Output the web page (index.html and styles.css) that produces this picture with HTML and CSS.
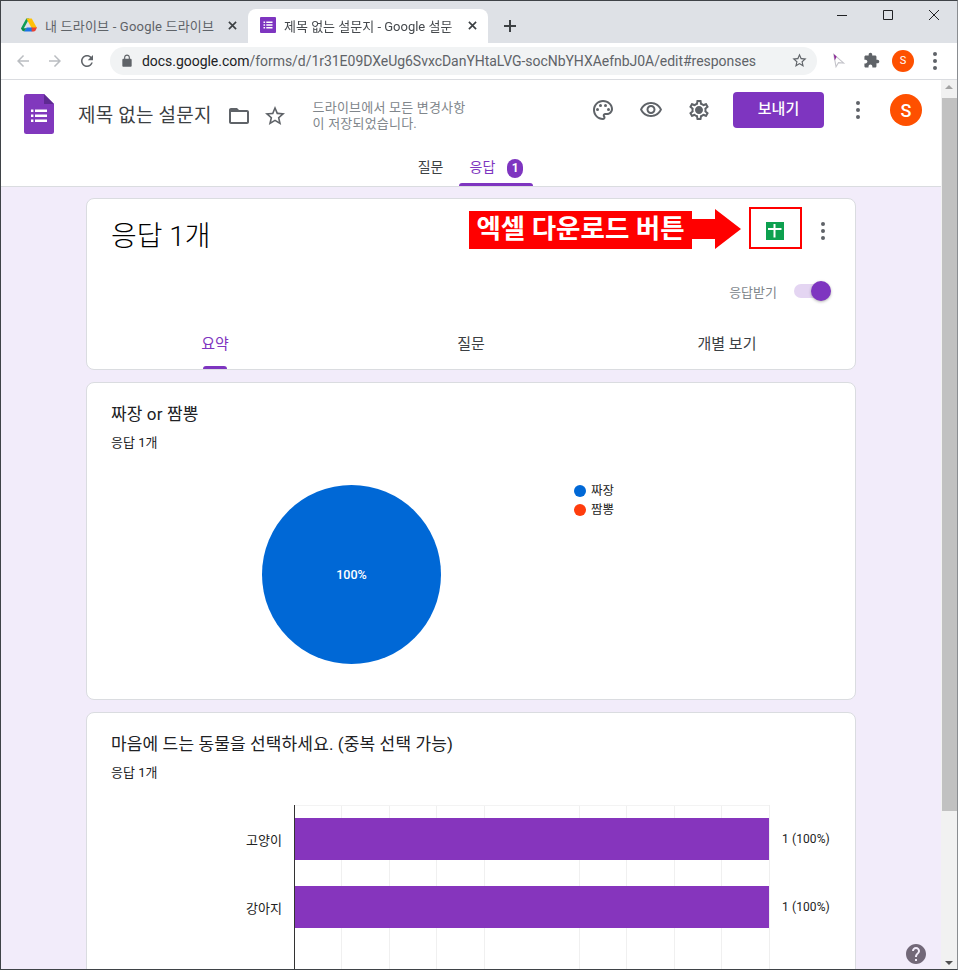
FILE: index.html
```html
<!DOCTYPE html>
<html lang="ko">
<head>
<meta charset="utf-8">
<title>제목 없는 설문지 - Google 설문지</title>
<link rel="stylesheet" href="styles.css">
</head>
<body>
<div class="window">
  <div class="tabstrip">
    <div class="tab">
      <svg class="favicon" viewBox="0 0 16 16"><path fill="#0f9d58" d="M5.3 1.5h3L3 11 1.6 14 0 11.2z"/><path fill="#ffc107" d="M5.3 1.5h5.4L16 11h-5.4z"/><path fill="#1a73e8" d="M3 14.6l2.7-4h5.6v4z"/><path fill="#ea4335" d="M10.6 10.6H16l-1.4 2.6-1.4 1.4h-2.6z"/><path fill="#0b8a4a" d="M0 11.2h5.5L3 14.6l-1.4-1z"/></svg>
      <span class="tab-title">내 드라이브 - Google 드라이브</span>
      <svg class="tab-close" viewBox="0 0 10 10"><path d="M1 1l8 8M9 1l-8 8"/></svg>
    </div>
    <div class="tab tab-active">
      <svg class="favicon" viewBox="0 0 16 16"><rect width="16" height="16" rx="1" fill="#7e35c0"/><path fill="#fff" d="M3.5 4.5h1.6v1.6H3.5zM6.3 4.5h6.2v1.6H6.3zM3.5 7.2h1.6v1.6H3.5zM6.3 7.2h6.2v1.6H6.3zM3.5 9.9h1.6v1.6H3.5zM6.3 9.9h6.2v1.6H6.3z"/></svg>
      <span class="tab-title">제목 없는 설문지 - Google 설문</span>
      <svg class="tab-close" viewBox="0 0 10 10"><path d="M1 1l8 8M9 1l-8 8"/></svg>
    </div>
    <svg class="new-tab" viewBox="0 0 12 12"><path d="M6 0v12M0 6h12"/></svg>
    <div class="window-controls">
      <svg viewBox="0 0 12 12"><path d="M1 6.5h10"/></svg>
      <svg viewBox="0 0 12 12"><path d="M1.5 1.5h9v9h-9z"/></svg>
      <svg viewBox="0 0 12 12"><path d="M1 1l10 10M11 1L1 11"/></svg>
    </div>
  </div>

  <div class="toolbar">
    <svg class="nav-icon faded" viewBox="0 0 24 24"><path d="M20 11H7.83l5.59-5.59L12 4l-8 8 8 8 1.41-1.41L7.83 13H20v-2z"/></svg>
    <svg class="nav-icon faded" viewBox="0 0 24 24"><path d="M4 11h12.17l-5.59-5.59L12 4l8 8-8 8-1.41-1.41L16.17 13H4v-2z"/></svg>
    <svg class="nav-icon" viewBox="0 0 24 24"><path d="M17.65 6.35C16.2 4.9 14.21 4 12 4c-4.42 0-7.99 3.58-7.99 8s3.57 8 7.99 8c3.73 0 6.84-2.55 7.73-6h-2.08c-.82 2.33-3.04 4-5.65 4-3.31 0-6-2.69-6-6s2.69-6 6-6c1.66 0 3.14.69 4.22 1.78L13 11h7V4l-2.35 2.35z"/></svg>
    <div class="omnibox">
      <svg class="lock" viewBox="0 0 24 24"><path d="M18 8h-1V6c0-2.76-2.24-5-5-5S7 3.24 7 6v2H6c-1.1 0-2 .9-2 2v10c0 1.1.9 2 2 2h12c1.1 0 2-.9 2-2V10c0-1.1-.9-2-2-2zM9 6c0-1.66 1.34-3 3-3s3 1.34 3 3v2H9V6z"/></svg>
      <span class="url"><span class="url-host">docs.google.com</span>/forms/d/1r31E09DXeUg6SvxcDanYHtaLVG-socNbYHXAefnbJ0A/edit#responses</span>
      <svg class="omni-star" viewBox="0 0 24 24"><path d="M22 9.24l-7.19-.62L12 2 9.19 8.63 2 9.24l5.46 4.73L5.82 21 12 17.27 18.18 21l-1.63-7.03L22 9.24zM12 15.4l-3.76 2.27 1-4.28-3.32-2.88 4.38-.38L12 6.1l1.71 4.04 4.38.38-3.32 2.88 1 4.28L12 15.4z"/></svg>
    </div>
    <svg class="ext-cursor" viewBox="0 0 16 18"><path fill="#fff" stroke="#c4c4ca" stroke-width="1.2" d="M2 1.5l2.6 14 2.8-4.6 6 .4z"/><path fill="#8e2a9a" d="M2 1l1.2 7L5.4 4.2z"/></svg>
    <svg class="ext-puzzle" viewBox="0 0 24 24"><path d="M20.5 11H19V7c0-1.1-.9-2-2-2h-4V3.5C13 2.12 11.88 1 10.5 1S8 2.12 8 3.5V5H4c-1.1 0-1.99.9-1.99 2v3.8H3.5c1.49 0 2.7 1.21 2.7 2.7s-1.21 2.7-2.7 2.7H2V20c0 1.1.9 2 2 2h3.8v-1.5c0-1.49 1.21-2.7 2.7-2.7 1.49 0 2.7 1.21 2.7 2.7V22H17c1.1 0 2-.9 2-2v-4h1.5c1.38 0 2.5-1.12 2.5-2.5S21.88 11 20.5 11z"/></svg>
    <span class="chrome-avatar">S</span>
    <span class="kebab kebab-chrome"><i></i><i></i><i></i></span>
  </div>

  <div class="viewport">
    <div class="page">
      <header class="form-header">
        <div class="header-main">
          <svg class="forms-logo" viewBox="0 0 30 40"><path fill="#8138bd" d="M2.5 0H20l10 10v27.5a2.5 2.5 0 0 1-2.5 2.5h-25A2.5 2.5 0 0 1 0 37.5v-35A2.5 2.5 0 0 1 2.5 0z"/><path fill="#5e2a92" d="M20 0l10 10H20z"/><path fill="#fff" d="M7 15.5h2.4v2.4H7zM11 15.5h12v2.4H11zM7 20.5h2.4v2.4H7zM11 20.5h12v2.4H11zM7 25.5h2.4v2.4H7zM11 25.5h12v2.4H11z"/></svg>
          <h1 class="form-title">제목 없는 설문지</h1>
          <svg class="head-icon folder" viewBox="0 0 24 24"><path d="M20 6h-8l-2-2H4c-1.1 0-1.99.9-1.99 2L2 18c0 1.1.9 2 2 2h16c1.1 0 2-.9 2-2V8c0-1.1-.9-2-2-2zm0 12H4V8h16v10z"/></svg>
          <svg class="head-icon star" viewBox="0 0 24 24"><path d="M22 9.24l-7.19-.62L12 2 9.19 8.63 2 9.24l5.46 4.73L5.82 21 12 17.27 18.18 21l-1.63-7.03L22 9.24zM12 15.4l-3.76 2.27 1-4.28-3.32-2.88 4.38-.38L12 6.1l1.71 4.04 4.38.38-3.32 2.88 1 4.28L12 15.4z"/></svg>
          <p class="save-note">드라이브에서 모든 변경사항<br>이 저장되었습니다.</p>
          <div class="header-actions">
            <svg class="head-icon" viewBox="0 0 24 24"><path d="M12 22C6.49 22 2 17.51 2 12S6.49 2 12 2s10 4.04 10 9c0 3.31-2.69 6-6 6h-1.77c-.28 0-.5.22-.5.5 0 .12.05.23.13.33.41.47.64 1.06.64 1.67 0 1.38-1.12 2.5-2.5 2.5zm0-18c-4.41 0-8 3.59-8 8s3.59 8 8 8c.28 0 .5-.22.5-.5 0-.16-.08-.28-.14-.35-.41-.46-.63-1.05-.63-1.65 0-1.38 1.12-2.5 2.5-2.5H16c2.21 0 4-1.79 4-4 0-3.86-3.59-7-8-7z"/><circle cx="6.5" cy="11.5" r="1.5"/><circle cx="9.5" cy="7.5" r="1.5"/><circle cx="14.5" cy="7.5" r="1.5"/><circle cx="17.5" cy="11.5" r="1.5"/></svg>
            <svg class="head-icon" viewBox="0 0 24 24"><path d="M12 6c3.79 0 7.17 2.13 8.82 5.5C19.17 14.87 15.79 17 12 17s-7.17-2.13-8.82-5.5C4.83 8.13 8.21 6 12 6m0-2C7 4 2.73 7.11 1 11.5 2.73 15.89 7 19 12 19s9.27-3.11 11-7.5C21.27 7.11 17 4 12 4zm0 5c1.38 0 2.5 1.12 2.5 2.5S13.38 14 12 14s-2.5-1.12-2.5-2.5S10.62 9 12 9m0-2c-2.48 0-4.5 2.02-4.5 4.5S9.52 16 12 16s4.5-2.02 4.5-4.5S14.48 7 12 7z"/></svg>
            <svg class="head-icon" viewBox="0 0 24 24"><path d="M19.43 12.98c.04-.32.07-.64.07-.98 0-.34-.03-.66-.07-.98l2.11-1.65c.19-.15.24-.42.12-.64l-2-3.46c-.09-.16-.26-.25-.44-.25-.06 0-.12.01-.17.03l-2.49 1c-.52-.4-1.08-.73-1.69-.98l-.38-2.65C14.46 2.18 14.25 2 14 2h-4c-.25 0-.46.18-.49.42l-.38 2.65c-.61.25-1.17.59-1.69.98l-2.49-1c-.06-.02-.12-.03-.18-.03-.17 0-.34.09-.43.25l-2 3.46c-.13.22-.07.49.12.64l2.11 1.65c-.04.32-.07.65-.07.98 0 .33.03.66.07.98l-2.11 1.65c-.19.15-.24.42-.12.64l2 3.46c.09.16.26.25.44.25.06 0 .12-.01.17-.03l2.49-1c.52.4 1.08.73 1.69.98l.38 2.65c.03.24.24.42.49.42h4c.25 0 .46-.18.49-.42l.38-2.65c.61-.25 1.17-.59 1.69-.98l2.49 1c.06.02.12.03.18.03.17 0 .34-.09.43-.25l2-3.46c.12-.22.07-.49-.12-.64l-2.11-1.65zm-1.98-1.71c.04.31.05.52.05.73 0 .21-.02.43-.05.73l-.14 1.13.89.7 1.08.84-.7 1.21-1.27-.51-1.04-.42-.9.68c-.43.32-.84.56-1.25.73l-1.06.43-.16 1.13-.2 1.35h-1.4l-.19-1.35-.16-1.13-1.06-.43c-.43-.18-.83-.41-1.23-.71l-.91-.7-1.06.43-1.27.51-.7-1.21 1.08-.84.89-.7-.14-1.13c-.03-.31-.05-.54-.05-.74s.02-.43.05-.73l.14-1.13-.89-.7-1.08-.84.7-1.21 1.27.51 1.04.42.9-.68c.43-.32.84-.56 1.25-.73l1.06-.43.16-1.13.2-1.35h1.39l.19 1.35.16 1.13 1.06.43c.43.18.83.41 1.23.71l.91.7 1.06-.43 1.27-.51.7 1.21-1.07.85-.89.7.14 1.13zM12 8c-2.21 0-4 1.79-4 4s1.79 4 4 4 4-1.79 4-4-1.79-4-4-4z"/></svg>
            <button class="send-btn">보내기</button>
            <span class="kebab kebab-head"><i></i><i></i><i></i></span>
            <span class="account">S</span>
          </div>
        </div>
        <nav class="form-tabs">
          <span class="form-tab">질문</span>
          <span class="form-tab form-tab-on">응답<b class="badge">1</b></span>
        </nav>
      </header>

      <main class="cards">
        <section class="card summary">
          <div class="summary-top">
            <h2 class="count">응답 1개</h2>
            <span class="kebab kebab-card"><i></i><i></i><i></i></span>
            <span class="sheets-btn">
              <svg class="sheets-icon" viewBox="0 0 18 18"><rect width="18" height="18" fill="#0da04f"/><path fill="#fff" d="M2 6h13.5v2H2zM7.5 2h2v13.5h-2z"/></svg>
            </span>
          </div>
          <div class="accepting">
            <span class="accepting-label">응답받기</span>
            <span class="toggle"><i></i></span>
          </div>
          <nav class="result-tabs">
            <span class="result-tab result-tab-on">요약</span>
            <span class="result-tab">질문</span>
            <span class="result-tab">개별 보기</span>
          </nav>
        </section>

        <section class="card question pie-card">
          <h3 class="q-title">짜장 or 짬뽕</h3>
          <p class="q-sub">응답 1개</p>
          <div class="pie-row">
            <div class="pie">100%</div>
            <ul class="legend">
              <li><i class="dot dot-blue"></i>짜장</li>
              <li><i class="dot dot-red"></i>짬뽕</li>
            </ul>
          </div>
        </section>

        <section class="card question bar-card">
          <h3 class="q-title">마음에 드는 동물을 선택하세요. (중복 선택 가능)</h3>
          <p class="q-sub">응답 1개</p>
          <div class="bar-chart">
            <div class="bar-row"><span class="bar-label">고양이</span><div class="plot"><i class="bar"></i></div><span class="bar-value">1 (100%)</span></div>
            <div class="bar-row"><span class="bar-label">강아지</span><div class="plot"><i class="bar"></i></div><span class="bar-value">1 (100%)</span></div>
            <div class="bar-row"><span class="bar-label"></span><div class="plot"></div></div>
          </div>
        </section>
      </main>

      <svg class="help" viewBox="2 2 20 20"><path d="M12 2C6.48 2 2 6.48 2 12s4.48 10 10 10 10-4.48 10-10S17.52 2 12 2zm1 17h-2v-2h2v2zm2.07-7.75l-.9.92C13.45 12.9 13 13.5 13 15h-2v-.5c0-1.1.45-2.1 1.17-2.83l1.24-1.26c.37-.36.59-.86.59-1.41 0-1.1-.9-2-2-2s-2 .9-2 2H8c0-2.21 1.79-4 4-4s4 1.79 4 4c0 .88-.36 1.68-.93 2.25z"/></svg>

      <!-- callout pointing at the spreadsheet button -->
      <div class="callout">엑셀 다운로드 버튼</div>
      <svg class="callout-arrow" viewBox="0 0 50 40"><path fill="#f00" d="M0 10h23V0l26 20-26 20V30H0z"/></svg>
      <div class="callout-box"></div>
    </div>

    <div class="scrollbar">
      <i class="arrow-up"></i>
      <div class="thumb"></div>
      <i class="arrow-down"></i>
    </div>
  </div>
</div>
</body>
</html>
```
FILE: styles.css
```css
* { box-sizing: border-box; }
html, body { margin: 0; padding: 0; }
body {
  width: 958px;
  height: 970px;
  overflow: hidden;
  background: #fff;
  font-family: Roboto, "Noto Sans CJK KR", sans-serif;
  color: #202124;
}
h1, h2, h3, p, ul { margin: 0; padding: 0; font-weight: 400; }
ul { list-style: none; }

.window {
  width: 958px;
  height: 970px;
  display: flex;
  flex-direction: column;
  border: 1px solid #3f4347;
  border-right-color: #8a8d91;
}

/* browser tab strip */
.tabstrip {
  height: 42px;
  flex: none;
  background: #dee1e6;
  display: flex;
  align-items: flex-end;
  padding-left: 8px;
}
.tab {
  width: 239px;
  height: 34px;
  display: flex;
  align-items: center;
  padding: 0 10px 2px 12px;
  font-size: 13px;
  letter-spacing: .2px;
  color: #5f6368;
}
.tab-active {
  width: 240px;
  background: #fff;
  border-radius: 8px 8px 0 0;
  letter-spacing: 0;
  color: #45494d;
}
.favicon { width: 16px; height: 16px; flex: none; margin-right: 8px; }
.tab-title { flex: 1; white-space: nowrap; }
.tab-active .tab-title {
  -webkit-mask-image: linear-gradient(to right, #000 calc(100% - 8px), rgba(0, 0, 0, .3));
  mask-image: linear-gradient(to right, #000 calc(100% - 8px), rgba(0, 0, 0, .3));
}
.tab-close { width: 9px; height: 9px; flex: none; margin: 0 1px 0 12px; }
.tab-close path { stroke: #3c4043; stroke-width: 1.8; fill: none; }
.new-tab { width: 12px; height: 12px; margin: 0 0 11px 16px; flex: none; }
.new-tab path { stroke: #3c4043; stroke-width: 2; fill: none; }
.window-controls {
  margin-left: auto;
  align-self: flex-start;
  display: flex;
  gap: 34px;
  padding: 8px 17px 0 0;
}
.window-controls svg { width: 12px; height: 12px; }
.window-controls path { fill: none; stroke: #202124; stroke-width: 1; }

/* address bar row */
.toolbar {
  height: 37px;
  flex: none;
  display: flex;
  align-items: center;
  border-bottom: 1px solid #dadce0;
  padding: 0 0 1px 13px;
}
.nav-icon { width: 18px; height: 18px; fill: #5f6368; flex: none; margin-right: 14px; }
.nav-icon.faded { fill: #babdc1; }
.omnibox {
  width: 707px;
  height: 28px;
  background: #f1f3f4;
  border-radius: 14px;
  display: flex;
  align-items: center;
  padding: 0 9px 0 10px;
}
.lock { width: 14px; height: 14px; fill: #5f6368; flex: none; margin-right: 8px; }
.url { flex: 1; font-size: 14px; letter-spacing: -.035px; color: #5f6368; white-space: nowrap; }
.url-host { color: #202124; }
.omni-star { width: 17px; height: 17px; fill: #5f6368; flex: none; }
.ext-cursor { width: 14px; height: 16px; flex: none; margin-left: 15px; }
.ext-puzzle { width: 17px; height: 17px; fill: #5f6368; flex: none; margin-left: 17px; }
.chrome-avatar {
  width: 22px;
  height: 22px;
  flex: none;
  margin-left: 12px;
  border-radius: 50%;
  background: #fe5000;
  color: #fff;
  font-size: 11px;
  display: flex;
  align-items: center;
  justify-content: center;
}
.kebab { display: flex; flex-direction: column; gap: 3px; flex: none; }
.kebab i { width: 4px; height: 4px; border-radius: 50%; background: #5f6368; }
.kebab-chrome { margin-left: 19px; }

/* page area with scrollbar */
.viewport { flex: 1; min-height: 0; display: flex; }
.page {
  position: relative;
  flex: 1;
  min-width: 0;
  background: #f2ecfa;
  overflow: hidden;
}
.scrollbar {
  width: 16px;
  flex: none;
  background: #f1f1f1;
  display: flex;
  flex-direction: column;
  align-items: center;
}
.thumb { width: 15px; height: 713px; margin-top: 9px; background: #c1c1c1; }
.arrow-up, .arrow-down { width: 0; height: 0; border: 4px solid transparent; }
.arrow-up { border-bottom: 4px solid #a3a3a3; border-top: 0; margin-top: 5px; }
.arrow-down { border-top: 4px solid #505050; border-bottom: 0; margin-top: 150px; }

/* form header */
.form-header {
  height: 107px;
  background: #fff;
  border-bottom: 1px solid #dadce0;
  display: flex;
  flex-direction: column;
}
.header-main {
  height: 58px;
  padding: 14px 0 0 23px;
  display: flex;
  align-items: flex-start;
}
.forms-logo { width: 30px; height: 40px; flex: none; }
.form-title { font-size: 19px; letter-spacing: .2px; line-height: 40px; margin: 2px 0 0 24px; color: #3c4043; white-space: nowrap; }
.head-icon { width: 24px; height: 24px; fill: #5f6368; flex: none; }
.folder { margin: 10px 0 0 15px; }
.star { margin: 10px 0 0 12px; }
.save-note { font-size: 13px; letter-spacing: .2px; line-height: 16px; color: #80868b; margin: 6px 0 0 26px; white-space: nowrap; }
.header-actions {
  margin-left: auto;
  display: flex;
  align-items: center;
  height: 36px;
  margin-top: -2px;
  padding-right: 19px;
  gap: 24px;
}
.send-btn {
  width: 91px;
  height: 36px;
  margin-left: -2px;
  border: 0;
  border-radius: 4px;
  background: #7e35c0;
  color: #fff;
  font: 500 15px Roboto, "Noto Sans CJK KR", sans-serif;
  padding: 0 0 5px;
}
.kebab-head { margin: 0 6px 0 8px; }
.account {
  width: 32px;
  height: 32px;
  border-radius: 50%;
  background: #fe5000;
  color: #fff;
  font-size: 18px;
  font-weight: 500;
  display: flex;
  align-items: center;
  justify-content: center;
}
.form-tabs { height: 49px; display: flex; justify-content: center; gap: 4px; padding-right: 2px; }
.form-tab {
  height: 48px;
  padding: 19px 11px 0;
  font-size: 14px;
  line-height: 20px;
  color: #3c4043;
  white-space: nowrap;
}
.form-tab-on {
  color: #7e35c0;
  padding-right: 10px;
  position: relative;
}
.form-tab-on::after {
  content: "";
  position: absolute;
  left: 0;
  right: 0;
  top: 45px;
  height: 3px;
  background: #7e35c0;
  border-radius: 3px 3px 0 0;
}
.badge {
  display: inline-block;
  min-width: 16px;
  height: 19px;
  margin-left: 12px;
  border-radius: 8px;
  background: #7e35c0;
  color: #fff;
  font-size: 12px;
  line-height: 19px;
  text-align: center;
  font-weight: 700;
}

/* response cards */
.cards {
  width: 770px;
  margin-left: 85px;
  padding-top: 11px;
  display: flex;
  flex-direction: column;
  gap: 12px;
}
.card {
  background: #fff;
  border: 1px solid #dadce0;
  border-radius: 8px;
  flex: none;
}
.summary { height: 172px; display: flex; flex-direction: column; }
.summary-top {
  display: flex;
  align-items: center;
  height: 70px;
  padding: 0 30px 0 24px;
}
.count { font-size: 28px; font-weight: 300; line-height: 70px; padding-top: 6px; color: #000; margin-right: auto; }
.sheets-btn { order: 1; width: 18px; height: 18px; margin: -6px 37px 0 0; }
.kebab-card { order: 2; margin: -6px 0 0 0; }
.sheets-icon { display: block; width: 18px; height: 18px; }
.accepting {
  display: flex;
  justify-content: flex-end;
  align-items: center;
  padding-right: 25px;
  margin-top: 10px;
  height: 24px;
}
.accepting-label { font-size: 13px; color: #80868b; margin-right: 17px; }
.toggle {
  position: relative;
  display: block;
  width: 36px;
  height: 14px;
  border-radius: 7px;
  background: #e4d5f2;
}
.toggle i {
  position: absolute;
  right: -1px;
  top: -3px;
  width: 20px;
  height: 20px;
  border-radius: 50%;
  background: #7e35c0;
  box-shadow: 0 1px 3px rgba(0, 0, 0, .3);
}
.result-tabs { display: grid; grid-template-columns: repeat(3, 1fr); margin-top: auto; height: 56px; }
.result-tab {
  text-align: center;
  font-size: 15px;
  line-height: 20px;
  padding-top: 21px;
  color: #3c4043;
  position: relative;
}
.result-tab-on { color: #7e35c0; }
.result-tab-on::after {
  content: "";
  position: absolute;
  left: 50%;
  bottom: 0;
  width: 24px;
  margin-left: -12px;
  height: 3px;
  background: #7e35c0;
  border-radius: 3px 3px 0 0;
}

.question { padding: 21px 24px 0; }
.q-title { font-size: 17px; letter-spacing: .12px; line-height: 20px; color: #202124; white-space: nowrap; }
.q-sub { font-size: 13px; line-height: 16px; margin-top: 11px; color: #202124; }

.pie-card { height: 318px; }
.pie-row { display: flex; align-items: flex-start; padding: 34px 0 0 151px; }
.pie {
  width: 179px;
  height: 179px;
  border-radius: 50%;
  background: #0068d6;
  color: #fff;
  font-size: 12.5px;
  font-weight: 500;
  display: flex;
  align-items: center;
  justify-content: center;
}
.legend { margin: -4px 0 0 133px; font-size: 12.5px; line-height: 19px; color: #222; }
.legend li { display: flex; align-items: center; gap: 5px; }
.dot { width: 12px; height: 12px; border-radius: 50%; }
.dot-blue { background: #0068d6; }
.dot-red { background: #ff3d0d; }

.bar-card { height: 320px; }
.bar-chart { margin: 24px 0 0 -1px; }
.bar-row { display: flex; align-items: center; height: 68px; }
.bar-label { width: 184px; padding-right: 12px; text-align: right; font-size: 13px; color: #222; flex: none; }
.plot {
  width: 476px;
  height: 68px;
  flex: none;
  display: flex;
  align-items: center;
  border-left: 1px solid #333;
  border-right: 1px solid #efefef;
  background: repeating-linear-gradient(to right, transparent 0 46.5px, #f0f0f0 46.5px 47.5px);
}
.bar-row:first-child .plot { box-shadow: inset 0 1px #f3f3f3; }
.bar { display: block; width: 474px; height: 42px; background: #8635bd; }
.bar-value { font-size: 12px; letter-spacing: .1px; color: #222; margin-left: 12px; white-space: nowrap; }

.help { position: absolute; right: 15px; bottom: 5px; width: 20px; height: 20px; fill: #726878; }

/* red annotation over the summary card */
.callout {
  position: absolute;
  left: 468px;
  top: 131px;
  width: 223px;
  height: 38px;
  background: #f00;
  color: #fff;
  font-size: 26.5px;
  font-weight: 700;
  line-height: 36px;
  text-align: center;
  white-space: nowrap;
}
.callout-arrow { position: absolute; left: 691px; top: 129px; width: 50px; height: 40px; }
.callout-box {
  position: absolute;
  left: 748px;
  top: 127px;
  width: 53px;
  height: 42px;
  border: 2px solid #f00;
}
```
